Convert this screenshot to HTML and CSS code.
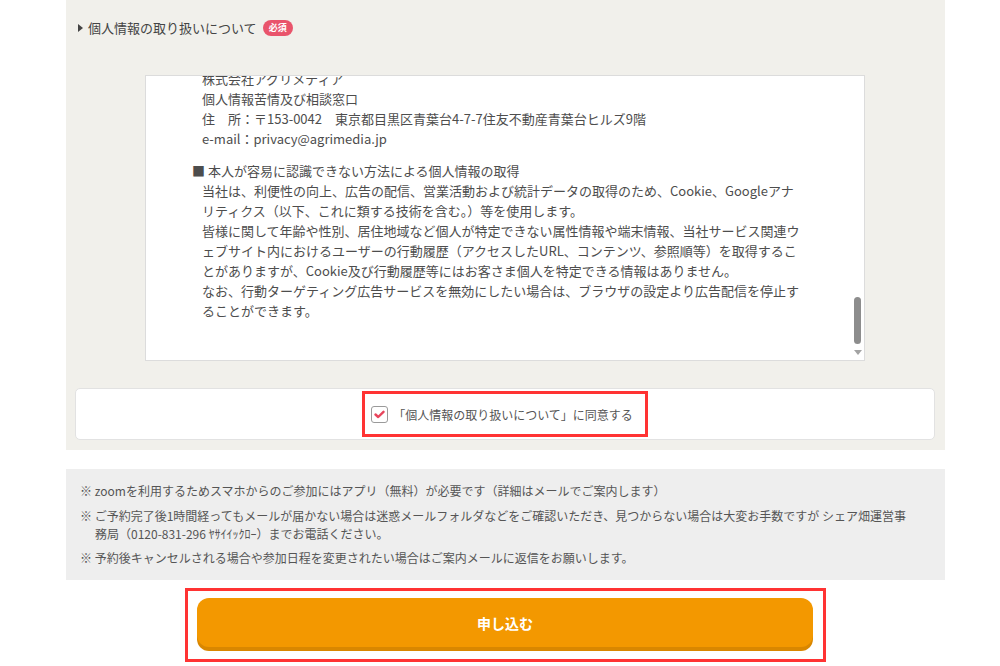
FILE: index.html
```html
<!DOCTYPE html>
<html lang="ja">
<head>
    <meta charset="UTF-8">
    <meta name="viewport" content="width=device-width, initial-scale=1.0">
    <title>個人情報の取り扱いについて</title>
    <link rel="stylesheet" href="styles.css">
</head>
<body>
    <div class="page">
        <section class="consent">
            <h3 class="consent-title">個人情報の取り扱いについて<span class="badge">必須</span></h3>

            <div class="policy-box">
                <div class="policy">
                    <div class="policy-section">
                        <h4 class="policy-head">■ お問い合わせ窓口</h4>
                        <p>本ポリシーに関するお問い合わせは、下記の窓口までお願いいたします。<br>
                        株式会社アグリメディア<br>
                        個人情報苦情及び相談窓口<br>
                        住　所：〒153-0042　東京都目黒区青葉台4-7-7住友不動産青葉台ヒルズ9階<br>
                        e-mail：privacy@agrimedia.jp</p>
                    </div>
                    <div class="policy-section">
                        <h4 class="policy-head">■ 本人が容易に認識できない方法による個人情報の取得</h4>
                        <p>当社は、利便性の向上、広告の配信、営業活動および統計データの取得のため、Cookie、Googleアナ<br>
                        リティクス（以下、これに類する技術を含む。）等を使用します。<br>
                        皆様に関して年齢や性別、居住地域など個人が特定できない属性情報や端末情報、当社サービス関連ウ<br>
                        ェブサイト内におけるユーザーの行動履歴（アクセスしたURL、コンテンツ、参照順等）を取得するこ<br>
                        とがありますが、Cookie及び行動履歴等にはお客さま個人を特定できる情報はありません。<br>
                        なお、行動ターゲティング広告サービスを無効にしたい場合は、ブラウザの設定より広告配信を停止す<br>
                        ることができます。</p>
                    </div>
                </div>
                <div class="scrollbar">
                    <span class="scrollbar-thumb"></span>
                    <span class="scrollbar-arrow"></span>
                </div>
            </div>

            <div class="agree">
                <label class="agree-label">
                    <span class="checkbox">
                        <svg width="11" height="9" viewBox="0 0 11 9"><path d="M1.5 4.5 L4.2 7 L9.5 1.8" fill="none" stroke="#e8455c" stroke-width="2.4" stroke-linecap="round" stroke-linejoin="round"/></svg>
                    </span>
                    「個人情報の取り扱いについて」に同意する
                </label>
            </div>
        </section>

        <ul class="notes">
            <li>※ zoomを利用するためスマホからのご参加にはアプリ（無料）が必要です（詳細はメールでご案内します）</li>
            <li>※ ご予約完了後1時間経ってもメールが届かない場合は迷惑メールフォルダなどをご確認いただき、見つからない場合は大変お手数ですが シェア畑運営事<br>務局（0120-831-296 ﾔｻｲｲｯｸﾛｰ）までお電話ください。</li>
            <li>※ 予約後キャンセルされる場合や参加日程を変更されたい場合はご案内メールに返信をお願いします。</li>
        </ul>

        <div class="submit-wrap">
            <button type="submit" class="submit-btn">申し込む</button>
        </div>
    </div>
</body>
</html>
```

FILE: styles.css
```css
body {
    margin: 0;
    font-family: "Noto Sans CJK JP", sans-serif;
    color: #4d4d4d;
    background: #fff;
}
.page {
    width: 879px;
    margin-left: 66px;
}
.consent {
    background: #f1f0eb;
    padding: 18px 10px 10px 9px;
}
.consent-title {
    display: flex;
    align-items: center;
    margin: 0 0 37px;
    padding-left: 3px;
    font-size: 13px;
    line-height: 20px;
    font-weight: normal;
    color: #444;
}
.consent-title::before {
    content: "";
    border-left: 5px solid #444;
    border-top: 4px solid transparent;
    border-bottom: 4px solid transparent;
    margin-right: 5px;
}
.badge {
    margin-left: 6px;
    padding: 1px 6px;
    background: #e9546b;
    color: #fff;
    font-size: 9px;
    font-weight: bold;
    line-height: 14px;
    border-radius: 8px;
}
.policy-box {
    position: relative;
    height: 286px;
    box-sizing: border-box;
    margin: 0 70px;
    background: #fff;
    border: 1px solid #dcdcdc;
    overflow: hidden;
    display: flex;
    flex-direction: column;
    justify-content: flex-end;
}
.policy {
    flex-shrink: 0;
    padding: 0 20px 39px 46px;
    font-size: 13px;
    line-height: 20px;
    color: #4d4d4d;
    white-space: nowrap;
}
.policy-section {
    margin-bottom: 12px;
}
.policy-section:last-child {
    margin-bottom: 0;
}
.policy-head {
    margin: 0;
    font-size: 13px;
    font-weight: normal;
}
.policy p {
    margin: 0;
    padding-left: 10px;
}
.scrollbar {
    position: absolute;
    top: 0;
    right: 0;
    bottom: 0;
    width: 12px;
    background: #fff;
}
.scrollbar-thumb {
    position: absolute;
    top: 221px;
    left: 2px;
    width: 7px;
    height: 47px;
    background: #8d8d8d;
    border-radius: 4px;
}
.scrollbar-arrow {
    position: absolute;
    bottom: 5px;
    left: 2px;
    border-top: 5px solid #a3a3a3;
    border-left: 4px solid transparent;
    border-right: 4px solid transparent;
}
.agree {
    margin-top: 27px;
    height: 52px;
    box-sizing: border-box;
    background: #fff;
    border: 1px solid #e2e2e2;
    border-radius: 5px;
    display: flex;
    justify-content: center;
    align-items: center;
}
.agree-label {
    display: flex;
    align-items: center;
    gap: 5px;
    height: 46px;
    box-sizing: border-box;
    padding: 0 12px 0 6px;
    border: 3px solid #ff3333;
    font-size: 12px;
    color: #555;
    cursor: pointer;
}
.checkbox {
    display: flex;
    align-items: center;
    justify-content: center;
    width: 17px;
    height: 17px;
    box-sizing: border-box;
    border: 1px solid #9a9a9a;
    border-radius: 3px;
    background: #fff;
}
.notes {
    list-style: none;
    margin: 19px 0 0;
    padding: 13px 14px 13px;
    background: #eeeeee;
    font-size: 12px;
    line-height: 18px;
    color: #555;
}
.notes li {
    padding-left: 15px;
    text-indent: -15px;
    margin-bottom: 6px;
}
.notes li:first-child {
    margin-bottom: 7px;
}
.notes li:last-child {
    margin-bottom: 0;
}
.submit-wrap {
    width: fit-content;
    margin: 8px auto 0;
    padding: 7px 10px 8px 9px;
    border: 3px solid #ff3333;
}
.submit-btn {
    display: block;
    width: 616px;
    height: 49px;
    margin-bottom: 4px;
    border: none;
    border-radius: 12px;
    background: #f39800;
    box-shadow: 0 4px 0 #d98700;
    color: #fff;
    font-family: "Noto Sans CJK JP", sans-serif;
    font-size: 14px;
    font-weight: bold;
    cursor: pointer;
}
```
